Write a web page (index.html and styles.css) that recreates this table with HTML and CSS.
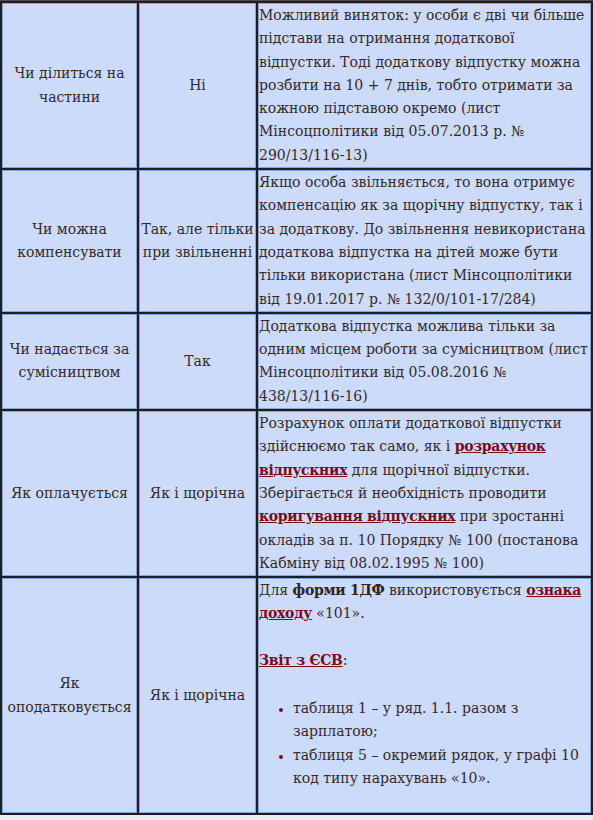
FILE: index.html
```html
<!DOCTYPE html>
<html lang="uk">
<head>
<meta charset="utf-8">
<title>Додаткова відпустка</title>
<link rel="stylesheet" href="styles.css">
</head>
<body>
<table class="info">
  <colgroup>
    <col class="c1"><col class="c2"><col class="c3">
  </colgroup>
  <tbody>
    <tr>
      <td class="q">Чи ділиться на частини</td>
      <td class="a">Ні</td>
      <td class="d">Можливий виняток: у особи є дві чи більше підстави на отримання додаткової відпустки. Тоді додаткову відпустку можна розбити на 10 + 7 днів, тобто отримати за кожною підставою окремо (лист Мінсоцполітики від 05.07.2013 р. № 290/13/116-13)</td>
    </tr>
    <tr>
      <td class="q">Чи можна компенсувати</td>
      <td class="a">Так, але тільки при звільненні</td>
      <td class="d">Якщо особа звільняється, то вона отримує компенсацію як за щорічну відпустку, так і за додаткову. До звільнення невикористана додаткова відпустка на дітей може бути тільки використана (лист Мінсоцполітики від 19.01.2017 р. № 132/0/101-17/284)</td>
    </tr>
    <tr>
      <td class="q">Чи надається за сумісництвом</td>
      <td class="a">Так</td>
      <td class="d">Додаткова відпустка можлива тільки за одним місцем роботи за сумісництвом (лист Мінсоцполітики від 05.08.2016 № 438/13/116-16)</td>
    </tr>
    <tr>
      <td class="q">Як оплачується</td>
      <td class="a">Як і щорічна</td>
      <td class="d">Розрахунок оплати додаткової відпустки здійснюємо так само, як і <a class="lnk" href="#">розрахунок відпускних</a> для щорічної відпустки. Зберігається й необхідність проводити <a class="lnk" href="#">коригування відпускних</a> при зростанні окладів за п. 10 Порядку № 100 (постанова Кабміну від 08.02.1995 № 100)</td>
    </tr>
    <tr>
      <td class="q">Як оподатковується</td>
      <td class="a">Як і щорічна</td>
      <td class="d">
        <p class="para">Для <strong class="strong">форми 1ДФ</strong> використовується <a class="lnk" href="#">ознака доходу</a> «101».</p>
        <p class="para"><a class="lnk" href="#">Звіт з ЄСВ</a>:</p>
        <ul class="list">
          <li>таблиця 1 – у ряд. 1.1. разом з зарплатою;</li>
          <li>таблиця 5 – окремий рядок, у графі 10 код типу нарахувань «10».</li>
        </ul>
      </td>
    </tr>
  </tbody>
</table>
</body>
</html>
```

FILE: styles.css
```css
html, body {
  margin: 0;
  padding: 0;
  background: #ecebf0;
}

body {
  font-family: "DejaVu Serif", "Liberation Serif", serif;
  font-size: 14px;
  line-height: 23.3px;
  color: #35292a;
}

.info {
  border-collapse: separate;
  border-spacing: 2px;
  background: #241b1d;
  border-top: 1px solid #4d4b55;
  width: 591px;
  table-layout: fixed;
}

.c1 { width: 135px; }
.c2 { width: 117px; }
.c3 { width: 333px; }

.info td {
  background: #ccdbf9;
  border: 1px solid #86a5dc;
  padding: 0;
  vertical-align: middle;
}

.info td.q,
.info td.a {
  text-align: center;
}

.info td.d {
  text-align: left;
}

.para {
  margin: 0 0 23px;
}

.strong {
  font-weight: bold;
  color: #2e2424;
  letter-spacing: -0.3px;
}

.lnk {
  color: #7a0b1c;
  font-weight: bold;
  letter-spacing: -0.3px;
  text-decoration: underline;
  text-decoration-color: #7a0b1c;
}

.list {
  margin: 25px 0 22px;
  padding-left: 34px;
}

.list li::marker {
  color: #7a0b1c;
  font-size: 12px;
}
```
